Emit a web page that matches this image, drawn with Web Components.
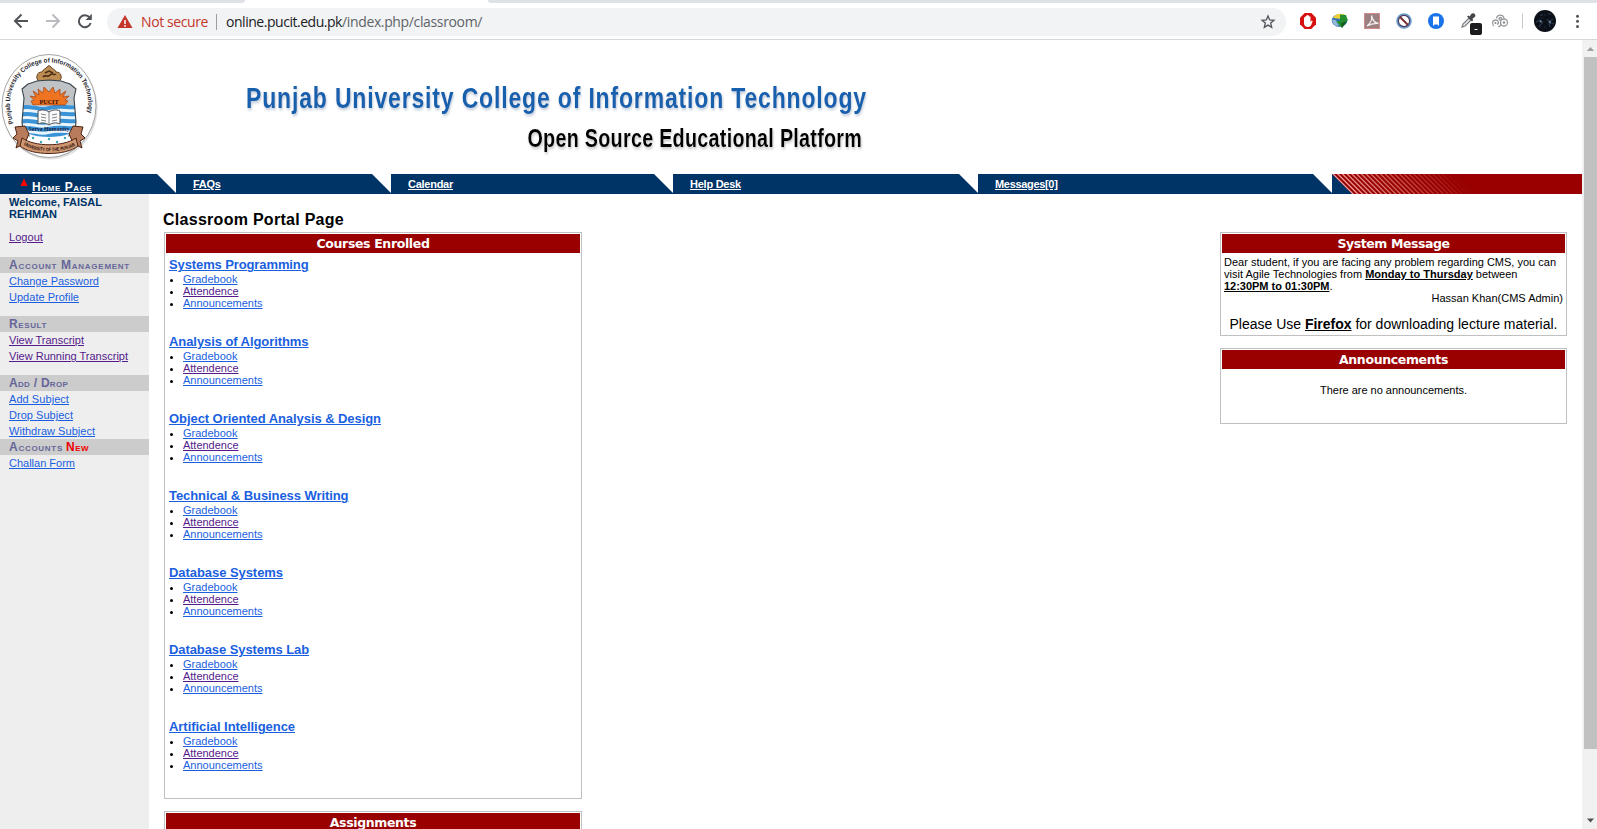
<!DOCTYPE html>
<html lang="en">
<head>
<meta charset="utf-8">
<title>Classroom Portal Page</title>
<style>
html,body{margin:0;height:100%;overflow:hidden;background:#fff}
body{font:11px/12px "Liberation Sans",Arial,sans-serif;color:#000}
</style>
</head>
<body>
<portal-app></portal-app>
<script>
class Base extends HTMLElement {
  constructor() {
    super();
    const t = document.createElement('template');
    t.innerHTML = this.view();
    this.attachShadow({ mode: 'open' }).appendChild(t.content.cloneNode(true));
  }
}

const LINK = 'a{color:#1a5fe0;text-decoration:underline;text-underline-offset:1px;text-decoration-thickness:1px}a.v{color:#551a8b}';

/* Browser toolbar */
class BrowserBar extends Base {
  view() {
    return `<style>
:host{display:block;height:40px;box-sizing:border-box;border-bottom:1px solid #d5d7da;background:#fff}
.strip{display:flex;height:3px;background:#fff;justify-content:space-between}
.strip i{background:#dee1e6;height:3px}
.strip i:first-child{width:245px;border-radius:0 0 4px 0}
.strip i:last-child{width:1109px;border-radius:0 0 0 4px}
.row{display:flex;height:36px;align-items:center}
.row svg{display:block;flex:none}
.nav{display:flex;width:107px;flex:none}
.omni{display:flex;align-items:center;width:1179px;height:28px;border-radius:14px;background:#f1f3f4;flex:none;font:14px/20px "Open Sans","Noto Sans",sans-serif;margin-top:1px;box-sizing:border-box;padding-left:10px}
.ns{color:#c5352b;margin-left:8px;width:75px}
.sep{width:1px;height:16px;background:#9a9da1;margin-right:9px}
.u{color:#202124}.p{color:#5f6368;flex:1}
.ext{flex:none}
</style>
<div class="strip"><i></i><i></i></div>
<div class="row">
<svg class="nav" width="107" height="36" viewBox="0 3 107 36" fill="none" stroke-width="2">
<path d="M28 21H15.5M21.5 14.5L15 21l6.500 6.500" stroke="#505458"/>
<path d="M46 21H58.500M52.500 14.500L59 21l-6.500 6.500" stroke="#b9bbbe"/>
<path d="M89.600 17.500A6 6 0 1 0 90.600 23" stroke="#505458"/><path d="M91.800 13.700V20h-6.300z" fill="#505458"/></svg>
<div class="omni">
<svg width="16" height="16" viewBox="0 0 16 16"><path d="M8 1L15.500 14H.5z" fill="#c5352b"/><path d="M8 6v4M8 11v1.700" stroke="#fff" stroke-width="1.500"/></svg>
<span class="ns"><fit-text w="67">Not secure</fit-text></span><span class="sep"></span>
<span class="u"><fit-text w="116">online.pucit.edu.pk</fit-text></span><span class="p"><fit-text w="140">/index.php/classroom/</fit-text></span>
<svg width="36" height="28" viewBox="1250 7 36 28"><path d="M1268 15l1.700 3.900 4.300.4-3.300 2.800 1 4.200-3.700-2.200-3.700 2.200 1-4.200-3.300-2.800 4.300-.4z" fill="none" stroke="#505458" stroke-width="1.300"/></svg>
</div>
<svg class="ext" width="311" height="36" viewBox="1286 3 311 36">
<path d="M1304.700 13h6.600l4.700 4.700v6.600l-4.700 4.700h-6.600l-4.700-4.700v-6.600z" fill="#d5100f"/>
<path d="M1304 17.500v5.500c0 2.800 1.500 4 4 4 1.900 0 2.900-1.200 3.400-2.500l1.300-3.500-1-.4-1.200 1.500V16.500h-1.400v-1h-1.200v-.5h-1.200v1h-1.200v1z" fill="#fff"/>
<ellipse cx="1339.500" cy="20.500" rx="7.800" ry="6.300" fill="#316fb5"/><path d="M1333 18c2-4 8-5.500 12-3l-4 4z" fill="#f0cf36"/><path d="M1332 20c3-1 6 1 7 5-3 2-6 0-7-5z" fill="#93b8da"/><path d="M1340 14.500l6 .5 1.500 4.500 1-.5-6.500 9-6-6.500 4-.5z" fill="#23902d"/><path d="M1341 23l6-2-5 7z" fill="#145f22"/>
<rect x="1364.500" y="13.500" width="15" height="15" fill="#9a8080" stroke="#d18b8b"/><path d="M1367 26c4-3 5.500-6 4.500-10.500 1.200 5.500 3 7.500 7 8-5-.5-8 .5-11.500 2.500z" fill="none" stroke="#f5eeee" stroke-width="1.300"/>
<circle cx="1404" cy="21" r="7.800" fill="#6f9dce"/><circle cx="1404" cy="21" r="5.600" fill="#fff" stroke="#473f5c" stroke-width="1.200"/><path d="M1400 17l8 8" stroke="#7a2e35" stroke-width="2"/>
<circle cx="1436" cy="21" r="8" fill="#1a73e8"/><path d="M1433 16.500h6v9.500l-1.500-1.500h-3l-1.500 1.500z" fill="#fff"/>
<path d="M1462 27l1-3 6-6 2 2-6 6z" fill="#e9eaeb" stroke="#777b80" stroke-width="1.200"/><path d="M1467 16.500l1.500-1 1 1 2-2.700c2-1.700 5 .8 3.500 3l-2.700 2.300 1 1-1.300 1.500z" fill="#44484d"/>
<rect x="1470" y="23" width="12" height="12" rx="2" fill="#1b1c1e"/><path d="M1474.500 29.500h3" stroke="#fff"/>
<g fill="none" stroke="#989b9e" stroke-width="1.300"><path d="M1494 26c-2.500-2-1.500-6 1.500-6s4 3.500 1.500 4.500"/><path d="M1496.500 18.500c.5-4.500 7-4.500 7.500 0"/><circle cx="1504" cy="22.500" r="3.500"/><path d="M1498 26.500c2 .5 3-1 2.500-3.500"/><circle cx="1500.300" cy="18.800" r="1.300"/></g><circle cx="1504" cy="22.500" r="1.200" fill="#85888b"/><circle cx="1495.500" cy="23" r="1" fill="#85888b"/>
<path d="M1522.500 13.500v15" stroke="#c7c9cc"/>
<circle cx="1545" cy="21" r="11" fill="#0b0f17"/><g stroke="#32465f" stroke-width="1.100" fill="none" opacity=".8"><path d="M1536 22l4-2 3 3M1539 27l3-4M1548 22l5-3M1547 19l3 4 4 1M1550 27l-1-4M1540 15h3M1548 14h3" /><path d="M1541 18h2M1545 14v2M1545 26v2" stroke="#222e40"/></g><circle cx="1540.500" cy="21.500" r="1" fill="#7793b5"/><circle cx="1550" cy="22" r="1" fill="#7793b5"/>
<g fill="#505458"><circle cx="1577.500" cy="16.300" r="1.500"/><circle cx="1577.500" cy="21.300" r="1.500"/><circle cx="1577.500" cy="26.400" r="1.500"/></g>
</svg></div>`;
  }
}

/* College crest and banner titles */
class SiteBanner extends Base {
  view() {
    return `<style>:host{display:block;height:134px}svg{display:block}</style>
<svg width="1000" height="134" viewBox="0 40 1000 134">
<defs>
<filter id="s" x="-5%" y="-20%" width="110%" height="150%"><feDropShadow dx="1" dy="2" stdDeviation="1.500" flood-color="#9cb0c8" flood-opacity=".7"/></filter>
<filter id="k" x="-5%" y="-20%" width="110%" height="150%"><feDropShadow dx="1" dy="2" stdDeviation="1.500" flood-color="#999" flood-opacity=".6"/></filter>
<path id="arc" d="M13.500 123.500C2 92 20 62.500 49 62.500S97 92 84 128"/>
<path id="rib" d="M23.500 144.500c10 9 42 9 53 0"/>
<clipPath id="sh"><path d="M28 84l9-3 12-1 12 1 9 3 6 5-2 9 2 24c0 12-11 17-27 23-16-6-27-11-27-23l2-24-2-9z"/></clipPath>
</defs>
<ellipse cx="50" cy="108" rx="47.500" ry="51.500" fill="#c9c9c9" opacity=".55"/>
<ellipse cx="49" cy="106" rx="47" ry="51.500" fill="#fff" stroke="#8b8b8b" stroke-width=".8"/>
<text font-family="Liberation Sans,Arial,sans-serif" font-weight="bold" font-size="6.600" fill="#25242c"><textPath href="#arc" textLength="156" lengthAdjust="spacingAndGlyphs">Punjab University College of Information Technology</textPath></text>
<path d="M40 84c-1-3-4-5-3-8 0-3 3-4 5-4 1-3 4-3 5-5l2-1.500 2 1.500c1 2 4 2 5 5 2 0 5 1 5 4 1 3-2 5-3 8z" fill="#bd8d54" stroke="#65431f"/><path d="M42 81h14M43 77c2-3 5 1 7-2s4 1 6-1M45 73l4-2 4 2" stroke="#4b3015" stroke-width="1.500" fill="none"/>
<g clip-path="url(#sh)"><path d="M20 74h58v36H20z" fill="#c0c3c6"/><path d="M20 105h58v45H20z" fill="#e9f4fb"/>
<path d="M20 108c10-4 18 3 29 0s18 0 29-1M20 115c10-4 18 3 29 0s18 0 29-1M20 122c10-4 18 3 29 0s18 0 29-1M20 129c10-4 18 3 29 0s18 0 29-1M20 136c10-4 18 3 29 0s18 0 29-1" stroke="#3a93d6" stroke-width="4" fill="none"/>
<path d="M33 105l-2-4 3-1-4-4 6 1-3-6 6 4-1-6 5 4 1-6 5 5 4-5 2 6 5-4 0 6 6-4-3 6 6-1-4 4 3 1-3 4z" fill="#ee7422" stroke="#a0400e" stroke-width=".7"/></g>
<path d="M28 84l9-3 12-1 12 1 9 3 6 5-2 9 2 24c0 12-11 17-27 23-16-6-27-11-27-23l2-24-2-9z" fill="none" stroke="#39434b" stroke-width="1.100"/>
<text x="39.500" y="103.500" font-family="Liberation Serif,serif" font-weight="bold" font-size="6.500" textLength="19" lengthAdjust="spacingAndGlyphs" fill="#32100b">PUCIT</text>
<path d="M38 111c4-2 8-1 11 1 3-2 7-3 11-1v13c-4-2-8-1-11 1-3-2-7-3-11-1z" fill="#fbfbfb" stroke="#45494d"/><path d="M49 112v12M41 114l5 1M41 117l5 1M41 120l5 1M52 115l5-1M52 118l5-1M52 121l5-1" stroke="#73777b" stroke-width=".9"/>
<text x="28.500" y="131" font-family="Liberation Serif,serif" font-weight="bold" font-size="6.500" textLength="41" lengthAdjust="spacingAndGlyphs" fill="#112047">Serve Humanity</text>
<path d="M15 127l10-1 4 8-4 9-9 5 2-7-5-3 4-4zM83 127l-10-1-4 8 4 9 9 5-2-7 5-3-4-4z" fill="#b87b5b" stroke="#4c2415"/>
<path d="M29 134c10 4 30 4 40 0l-3 9c-8 4-26 4-34 0z" fill="#fff"/><g fill="#38a8ba"><circle cx="33" cy="138" r="1.200"/><circle cx="41" cy="142" r="1.200"/><circle cx="49" cy="139" r="1.200"/><circle cx="57" cy="142" r="1.200"/><circle cx="65" cy="138" r="1.200"/></g>
<path d="M22 138c13 9 41 9 54 0l2 8c-12 10-46 10-58 0z" fill="#cf9872" stroke="#4c2415"/>
<text font-family="Liberation Sans,Arial,sans-serif" font-weight="bold" font-size="5" fill="#30120a"><textPath href="#rib" textLength="54" lengthAdjust="spacingAndGlyphs">UNIVERSITY OF THE PUNJAB</textPath></text>
<g font-family="Liberation Sans Narrow,Liberation Sans,Arial,sans-serif" font-weight="bold">
<text transform="translate(246 108) scale(.78 1)" font-size="29.500" textLength="795" lengthAdjust="spacing" fill="#1560ad" filter="url(#s)">Punjab University College of Information Technology</text>
<text transform="translate(527.500 147) scale(.76 1)" font-size="26" textLength="440" lengthAdjust="spacing" fill="#000" filter="url(#k)">Open Source Educational Platform</text></g>
</svg>`;
  }
}

/* One navy tab with its slanted right end */
class NavTab extends Base {
  view() {
    return `<style>
:host{display:flex;height:20px;box-sizing:border-box;background:#036;color:#fff;justify-content:space-between;font-weight:bold;line-height:20px;padding-left:17px}
:host([home]){padding-left:20px;font-variant:small-caps;line-height:27px;font-size:12px}
::slotted(*){text-decoration:underline;text-underline-offset:1px}
.end{display:block;flex:none}</style>
<slot></slot><svg class="end" width="19" height="20"><path d="M0 0H19V19z" fill="#fff"/></svg>`;
  }
}
class NavBar extends Base {
  view() {
    let s = '';
    for (let x = 1; x < 125; x += 4.75) s += `<path d="M${x - 1} -1l22 22" stroke="#ffb9b4" stroke-width="1.300" opacity="${Math.max(0, .9 - x / 136).toFixed(2)}"/>`;
    return `<style>
:host{display:grid;grid-template-columns:176px 215px 282px 305px 354px 250px;height:20px}
svg{display:block}.tri{flex:none;margin-right:4px}.h{display:flex;text-decoration:none!important}.h u{text-underline-offset:1px}</style>
<nav-tab home><span class="h"><svg class="tri" width="8" height="20"><path d="M4 4.500l3.700 7.500H.3z" fill="#f00"/></svg><u><fit-text w="60">Home Page</fit-text></u></span></nav-tab>
<nav-tab><span><fit-text w="27.500">FAQs</fit-text></span></nav-tab>
<nav-tab><span><fit-text w="45">Calendar</fit-text></span></nav-tab>
<nav-tab><span><fit-text w="51">Help Desk</fit-text></span></nav-tab>
<nav-tab><span><fit-text w="62.500">Messages[0]</fit-text></span></nav-tab>
<svg width="250" height="20"><path d="M0 0h250v20H0z" fill="#900"/>${s}<path d="M0 0l20 20H0z" fill="#036"/></svg>`;
  }
}

class SideGroup extends Base {
  view() {
    const n = this.getAttribute('new');
    return `<style>:host{display:block;margin-bottom:11px}:host([tight]){margin-bottom:0}
h3{margin:0;height:16px;font:bold 12px/17px "Liberation Sans",Arial,sans-serif;font-variant:small-caps;background:#ccc;color:#669;padding-left:9px}
h3 b{color:#e00;margin-left:3px}.l{display:flex;flex-direction:column;align-items:flex-start;padding-left:9px;line-height:16px}</style>
<h3><fit-text w="${this.getAttribute('w')}">${this.getAttribute('label')}</fit-text>${n ? `<b><fit-text w="23">${n}</fit-text></b>` : ''}</h3><div class="l"><slot></slot></div>`;
  }
}
class SideBar extends Base {
  view() {
    return `<style>${LINK}:host{display:block;width:149px;background:#eee;box-sizing:border-box;padding-top:2px}
.w{font-weight:bold;color:#036;padding-left:9px}.o{padding:11px 0 14px 9px;line-height:12px}</style>
<div class="w"><fit-text w="93">Welcome, FAISAL</fit-text><br><fit-text w="48">REHMAN</fit-text></div>
<div class="o"><a class="v"><fit-text w="34">Logout</fit-text></a></div>
<side-group label="Account Management" w="121"><a><fit-text w="90">Change Password</fit-text></a><a><fit-text w="70">Update Profile</fit-text></a></side-group>
<side-group label="Result" w="38"><a class="v"><fit-text w="75">View Transcript</fit-text></a><a class="v"><fit-text w="119">View Running Transcript</fit-text></a></side-group>
<side-group label="Add / Drop" w="59" tight><a><fit-text w="60">Add Subject</fit-text></a><a><fit-text w="64">Drop Subject</fit-text></a><a><fit-text w="86">Withdraw Subject</fit-text></a></side-group>
<side-group label="Accounts" w="54" new="New"><a><fit-text w="66">Challan Form</fit-text></a></side-group>`;
  }
}

class PortalPanel extends Base {
  view() {
    return `<style>:host{display:block;box-sizing:border-box;border:1px solid silver;padding:1px;margin-bottom:12px}
h2{margin:0;height:19px;background:#900;color:#fff;text-align:center;font:bold 12.500px/19px "DejaVu Sans",Verdana,sans-serif}</style>
<h2><fit-text w="${this.getAttribute('w')}">${this.getAttribute('label')}</fit-text></h2><slot></slot>`;
  }
}
class CourseItem extends Base {
  view() {
    return `<style>${LINK}:host{display:block;height:77px;padding-left:3px}
.t{font:bold 13px/16px "Liberation Sans",Arial,sans-serif;height:16px}
ul{margin:0;padding:0;list-style:none}li{display:flex;align-items:center;height:12px;line-height:12px}
li i{width:3px;height:3px;border-radius:1.500px;background:#000;margin:2px 10px 0 1px}</style>
<div class="t"><a><fit-text w="${this.getAttribute('w')}">${this.getAttribute('name').replace('&', '&amp;')}</fit-text></a></div>
<ul><li><i></i><a><fit-text w="54.500">Gradebook</fit-text></a></li><li><i></i><a class="v"><fit-text w="55.500">Attendence</fit-text></a></li><li><i></i><a><fit-text w="79.500">Announcements</fit-text></a></li></ul>`;
  }
}

class ScrollTrack extends Base {
  view() {
    return `<style>:host{display:flex;flex-direction:column;width:15px;background:#f1f1f1;overflow:hidden}
svg{display:block;flex:none}.t{height:692px;margin-left:2px;background:#c1c1c1}.g{flex:1}</style>
<svg width="15" height="17"><path d="M8.500 7l3.700 4H4.800z" fill="#a0a0a0"/></svg><div class="t"></div><div class="g"></div><svg width="15" height="17"><path d="M8.500 10.500L5 6.500h7z" fill="#505050"/></svg>`;
  }
}

class PortalApp extends Base {
  view() {
    const c = [['Systems Programming', 139.5], ['Analysis of Algorithms', 139.5], ['Object Oriented Analysis & Design', 212], ['Technical & Business Writing', 179.5], ['Database Systems', 114], ['Database Systems Lab', 140], ['Artificial Intelligence', 126]];
    return `<style>
:host{display:flex;flex-direction:column;height:829px;width:1597px;overflow:hidden}
.view{display:flex;height:789px}.page{width:1582px;height:789px;overflow:hidden}
.body{display:flex;height:635px}.main{width:1433px;box-sizing:border-box;padding:16px 15px 0 15px}
h1{margin:0 0 0 -1px;font:bold 16px/20px "Liberation Sans",Arial,sans-serif;height:22px}
.cols{display:flex;justify-content:space-between}.a{width:418px}.b{width:347px}
.courses{padding-top:4px;height:540px}
.msg{padding:3px 3px 0 2px;height:81px;box-sizing:border-box;white-space:nowrap}.r{text-align:right;margin-right:-1px}.ff{text-align:center;font-size:14px;line-height:16px;padding:12px 0 0 1px}
u{text-underline-offset:1px}.none{height:53px;text-align:center;padding-top:15px;box-sizing:border-box}
.fill{height:120px}</style>
<browser-bar></browser-bar>
<div class="view"><div class="page"><site-banner></site-banner><nav-bar></nav-bar>
<div class="body"><side-bar></side-bar><div class="main"><h1><fit-text w="181">Classroom Portal Page</fit-text></h1>
<div class="cols"><div class="a">
<portal-panel label="Courses Enrolled" w="113"><div class="courses">${c.map(([n, w]) => `<course-item name="${n.replace('&', '&amp;')}" w="${w}"></course-item>`).join('')}</div></portal-panel>
<portal-panel label="Assignments" w="86.500"><div class="fill"></div></portal-panel></div>
<div class="b"><portal-panel label="System Message" w="112"><div class="msg">
<fit-text w="332">Dear student, if you are facing any problem regarding CMS, you can</fit-text><br><fit-text w="293.500">visit Agile Technologies from <b><u>Monday to Thursday</u></b> between</fit-text><br><fit-text w="108.500"><b><u>12:30PM to 01:30PM</u></b>.</fit-text>
<div class="r"><fit-text w="131.500">Hassan Khan(CMS Admin)</fit-text></div><div class="ff"><fit-text w="328">Please Use <b><u>Firefox</u></b> for downloading lecture material.</fit-text></div></div></portal-panel>
<portal-panel label="Announcements" w="109"><div class="none"><fit-text w="147">There are no announcements.</fit-text></div></portal-panel></div></div></div></div></div>
<scroll-track></scroll-track></div>`;
  }
}

/* Inline text spaced to an exact run width */
class FitText extends Base {
  view() { return '<style>:host{display:inline;white-space:nowrap}</style><span><slot></slot></span>'; }
  connectedCallback() {
    const s = this.shadowRoot.firstElementChild.nextElementSibling;
    const w = s.getBoundingClientRect().width, n = this.textContent.trim().length;
    if (w && n) this.style.letterSpacing = ((+this.getAttribute('w') - w) / n).toFixed(3) + 'px';
  }
}

[['portal-app', PortalApp], ['browser-bar', BrowserBar], ['site-banner', SiteBanner], ['nav-bar', NavBar], ['nav-tab', NavTab], ['side-bar', SideBar], ['side-group', SideGroup], ['portal-panel', PortalPanel], ['course-item', CourseItem], ['scroll-track', ScrollTrack], ['fit-text', FitText]].forEach(([n, k]) => customElements.define(n, k));
</script>
</body>
</html>
